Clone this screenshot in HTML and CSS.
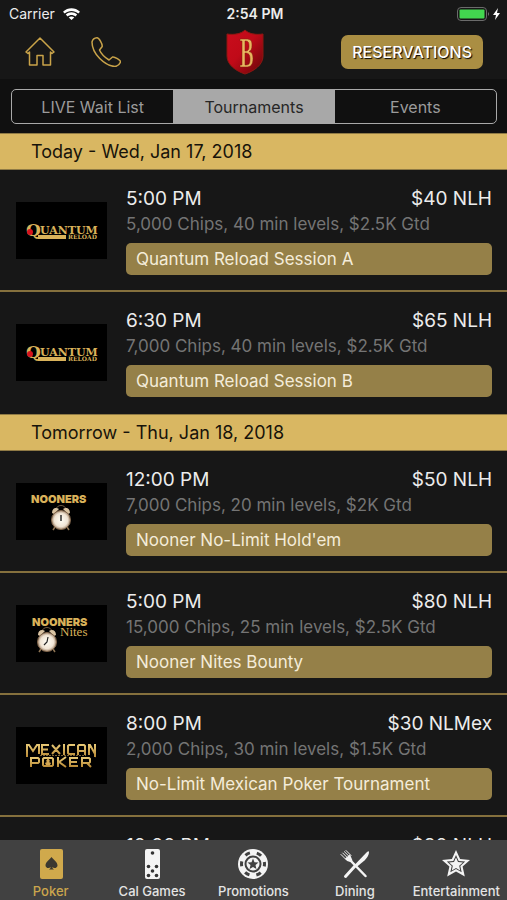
FILE: index.html
```html
<!DOCTYPE html>
<html lang="en">
<head>
<meta charset="utf-8">
<meta name="viewport" content="width=device-width, initial-scale=1">
<title>Tournaments</title>
<link rel="stylesheet" href="styles.css">
</head>
<body>
<svg class="defs" aria-hidden="true">
  <defs>
    <linearGradient id="gold" x1="0" y1="0" x2="0" y2="1">
      <stop offset="0" stop-color="#e8ca78"/><stop offset="1" stop-color="#b98a35"/>
    </linearGradient>
    <radialGradient id="face">
      <stop offset="0" stop-color="#fffdf5"/><stop offset=".7" stop-color="#f0e4d4"/><stop offset="1" stop-color="#a58a70"/>
    </radialGradient>
    <linearGradient id="shield" x1="0" y1="0" x2="1" y2="1">
      <stop offset="0" stop-color="#c90d1c"/><stop offset=".45" stop-color="#c00a18"/><stop offset="1" stop-color="#650609"/>
    </linearGradient>
    <symbol id="quantum" viewBox="0 0 91 57">
      <path d="M22 33h28v4H22z" fill="#d9b25a"/>
      <text x="10" y="34" class="logo-slab logo-q">Q</text>
      <text x="24" y="32" class="logo-slab">UANTUM</text>
      <circle cx="14" cy="30" r="3" fill="#d5131c"/>
      <text x="52" y="37" class="logo-small">RELOAD</text>
    </symbol>
    <symbol id="clock" viewBox="0 0 22 28">
      <path d="M6 6C6 0 16 0 16 6" fill="none" stroke="#6d5a42" stroke-width="1"/>
      <path d="M2 9C2 4 6 3 9 5L4 10zM20 9C20 4 16 3 13 5L18 10z" fill="#d9c3a2"/>
      <path d="M5 23l-2 3M17 23l2 3" stroke="#8d7353" stroke-width="1.5"/>
      <circle cx="11" cy="16" r="9.5" fill="url(#face)" stroke="#80654b"/>
    </symbol>
    <symbol id="nooners" viewBox="0 0 91 57">
      <text x="15" y="20" class="logo-deco">NOONERS</text>
      <use href="#clock" x="34" y="21" width="22" height="28"/>
      <path d="M45 32v6" stroke="#222" stroke-width="1.4"/>
    </symbol>
    <symbol id="nites" viewBox="0 0 91 57">
      <text x="16" y="21" class="logo-deco">NOONERS</text>
      <text x="44" y="31" class="logo-nites">Nites</text>
      <use href="#clock" x="20" y="21" width="22" height="28"/>
      <path d="M32 32l-1 5-3 3" fill="none" stroke="#222" stroke-width="1.2"/>
    </symbol>
    <symbol id="mexican" viewBox="0 0 91 57">
      <g fill="none" stroke="url(#gold)" stroke-width="2">
        <path d="M11 30V18h2l4 6 4-6h2v9M33 18h-7v9h7M26 22.500h6M36 18l8 9M44 18l-8 9M48 17v11M59 18h-6l-1 1v7l1 1h6M62 28v-9l1-1h5l1 1v9M62 24h7M73 28V18h1l5 9V17M79 18v12"/>
        <path d="M15 40v-9h7l1 1v3l-1 1h-7M28 31h8l1 1v6l-1 1h-8l-1-1v-6zM42 30v10M50 30l-7 5 7 5M62 31h-8v8h8M54 35h7M66 40v-9h7l1 1v3l-1 1h-7M71 36l4 4"/>
      </g>
      <path d="M32 31l2 3-1 1 2 1-1 2h-4l-1-2 2-1-1-1z" fill="#d2a651"/>
      <path d="M24 28.500h46" stroke="#7b6232" stroke-dasharray="2 1"/>
    </symbol>
  </defs>
</svg>

<header class="top">
  <div class="status">
    <div class="status-side">
      <span>Carrier</span>
      <svg class="wifi" viewBox="0 0 17 12" role="img" aria-label="Wi-Fi"><path d="M0 3.700C5-.9 12-.9 17 3.700L15.300 5.500C11.500 2 5.500 2 1.700 5.500zM2.800 6.600c3.300-3 8.100-3 11.400 0l-1.800 1.900c-2.300-2-5.500-2-7.800 0zM5.700 9.500c1.600-1.400 4-1.400 5.600 0L8.500 12z" fill="#fff"/></svg>
    </div>
    <time class="clock-time">2:54 PM</time>
    <div class="status-side status-end">
      <svg class="battery" viewBox="0 0 44 14" role="img" aria-label="Battery charging">
        <rect x=".5" y=".5" width="29" height="13" rx="3.500" fill="none" stroke="#6b6b6b"/>
        <rect x="2.500" y="2.500" width="25" height="9" rx="1" fill="#42d74f"/>
        <path d="M31 5q2 2 0 4z" fill="#777"/>
        <path d="M41 1l-5 7h3l-1 5 5-7h-3z" fill="#fff"/>
      </svg>
    </div>
  </div>
  <div class="nav">
    <div class="nav-links">
      <a href="#home" aria-label="Home"><svg class="nav-icon" viewBox="0 0 30 30"><path d="M1 15L15 1l14 14-2 1.500-1.500-1.500v13H18V18.500h-6V28H4.500V15L3 16.500z"/></svg></a>
      <a href="#call" aria-label="Call"><svg class="nav-icon" viewBox="0 0 30 30"><path d="M6 .8Q2 1 1 5C1 17 14 29 24 29.500q4-.5 5.500-4.500c.3-2-6-5.500-8-5l-3.500 3C14 20.500 10 16.500 8.500 13l2.700-3.500C11.500 7 8 .7 6 .8z"/></svg></a>
    </div>
    <svg class="shield" viewBox="0 0 38 46" role="img" aria-label="B">
      <path d="M19 1C15 5 8 6 1 5v22c0 9 9 15 18 18 9-3 18-9 18-18V5C30 6 23 5 19 1z" fill="url(#shield)" stroke="#8d1711"/>
      <path d="M14 10h6c5 0 6 2 6 6 0 4-1 6-3 6.500 3 .5 4 3 4 7 0 6-2 8.500-7 8.500h-6v-2h2V12h-2zm5 2v10c3 0 4-1 4-5 0-4-1-5-4-5zm0 12v12c4 0 5-1 5-6 0-4-1-6-5-6z" fill="#e8b65f" fill-rule="evenodd" stroke="#7f200d" stroke-width=".5"/>
    </svg>
    <div class="nav-end"><button class="reserve" type="button">RESERVATIONS</button></div>
  </div>
</header>

<nav class="segments" aria-label="Poker sections">
  <button type="button">LIVE Wait List</button>
  <button type="button" class="selected" aria-pressed="true">Tournaments</button>
  <button type="button">Events</button>
</nav>

<main class="list">
  <h2 class="day">Today - Wed, Jan 17, 2018</h2>
  <article class="event">
    <svg class="thumb" viewBox="0 0 91 57" aria-hidden="true"><use href="#quantum"/></svg>
    <div class="info">
      <div class="headline"><time>5:00 PM</time><span>$40 NLH</span></div>
      <p class="meta">5,000 Chips, 40 min levels, $2.5K Gtd</p>
      <h3 class="name">Quantum Reload Session A</h3>
    </div>
  </article>
  <article class="event">
    <svg class="thumb" viewBox="0 0 91 57" aria-hidden="true"><use href="#quantum"/></svg>
    <div class="info">
      <div class="headline"><time>6:30 PM</time><span>$65 NLH</span></div>
      <p class="meta">7,000 Chips, 40 min levels, $2.5K Gtd</p>
      <h3 class="name">Quantum Reload Session B</h3>
    </div>
  </article>
  <h2 class="day">Tomorrow - Thu, Jan 18, 2018</h2>
  <article class="event">
    <svg class="thumb" viewBox="0 0 91 57" aria-hidden="true"><use href="#nooners"/></svg>
    <div class="info">
      <div class="headline"><time>12:00 PM</time><span>$50 NLH</span></div>
      <p class="meta">7,000 Chips, 20 min levels, $2K Gtd</p>
      <h3 class="name">Nooner No-Limit Hold'em</h3>
    </div>
  </article>
  <article class="event">
    <svg class="thumb" viewBox="0 0 91 57" aria-hidden="true"><use href="#nites"/></svg>
    <div class="info">
      <div class="headline"><time>5:00 PM</time><span>$80 NLH</span></div>
      <p class="meta">15,000 Chips, 25 min levels, $2.5K Gtd</p>
      <h3 class="name">Nooner Nites Bounty</h3>
    </div>
  </article>
  <article class="event">
    <svg class="thumb" viewBox="0 0 91 57" aria-hidden="true"><use href="#mexican"/></svg>
    <div class="info">
      <div class="headline"><time>8:00 PM</time><span>$30 NLMex</span></div>
      <p class="meta">2,000 Chips, 30 min levels, $1.5K Gtd</p>
      <h3 class="name">No-Limit Mexican Poker Tournament</h3>
    </div>
  </article>
  <article class="event">
    <div class="thumb"></div>
    <div class="info">
      <div class="headline"><time>10:00 PM</time><span>$80 NLH</span></div>
    </div>
  </article>
</main>

<nav class="tabs" aria-label="Main">
  <a href="#poker" class="active" aria-current="page">
    <svg viewBox="0 0 32 32"><rect x="5" y="1" width="23" height="30" rx="2" fill="#d0a94c"/><path d="M16.500 9c2 3 6 5 6 8.500 0 2.500-3.500 3.500-5.200 1.500.1 1.300.8 2 1.700 2.500h-5c.9-.5 1.600-1.200 1.700-2.500-1.700 2-5.200 1-5.200-1.500 0-3.500 4-5.500 6-8.500z" fill="#3b3830"/></svg>
    <span>Poker</span>
  </a>
  <a href="#cal">
    <svg viewBox="0 0 32 32"><rect x="9" y="1" width="15" height="30" rx="2" fill="#f4f4f4"/><g fill="#333"><circle cx="16.500" cy="5" r="1.800"/><circle cx="12.500" cy="18.500" r="1.800"/><circle cx="20.500" cy="18.500" r="1.800"/><circle cx="16.500" cy="23" r="1.800"/><circle cx="12.500" cy="27.500" r="1.800"/><circle cx="20.500" cy="27.500" r="1.800"/></g></svg>
    <span>Cal Games</span>
  </a>
  <a href="#promotions">
    <svg viewBox="0 0 32 32"><circle cx="16" cy="16" r="15" fill="#f4f4f4"/><circle cx="16" cy="16" r="11.500" fill="none" stroke="#414141" stroke-width="3" stroke-dasharray="5 7.043" stroke-dashoffset="2.500"/><circle cx="16" cy="16" r="7.500" fill="#f4f4f4" stroke="#414141" stroke-width="2"/><path d="M16 10.500l1.500 3.700 4 .3-3 2.600.9 3.900-3.400-2.100-3.400 2.100.9-3.900-3-2.600 4-.3z" fill="#414141"/></svg>
    <span>Promotions</span>
  </a>
  <a href="#dining">
    <svg viewBox="0 0 32 32"><g fill="none" stroke="#f4f4f4" stroke-linecap="round"><path d="M11 12l15.500 16" stroke-width="2.500"/><path d="M2 6.500l5 5M3.700 5l5 5M5.400 3.700l5 5M7 2.500l5 5" stroke-width="1"/><path d="M6.500 28.500L16 18" stroke-width="3"/></g><path d="M6 10.500l5-4 2.500 6-2 1.500q-4-.5-5.500-3.500z" fill="#f4f4f4"/><path d="M15 17.500L28 4q2-1.500 2 0 0 4-4.500 8.500l-8.500 7z" fill="#f4f4f4"/></svg>
    <span>Dining</span>
  </a>
  <a href="#entertainment">
    <svg viewBox="0 0 32 32"><path d="M16 2l4.100 9 9.900 1-7.400 6.600 2.200 9.900-8.800-5.100-8.800 5.100 2.200-9.900L2 12l9.900-1z" fill="#f4f4f4"/><path d="M16 7l2.700 5.900 6.500.7-4.900 4.300 1.400 6.400-5.700-3.300-5.700 3.300 1.400-6.400-4.900-4.300 6.500-.7z" fill="#414141"/><path d="M16 9.500l2 4.500 4.900.5-3.700 3.200 1 4.800-4.200-2.500-4.200 2.500 1-4.800-3.700-3.200 4.900-.5z" fill="#f4f4f4"/></svg>
    <span>Entertainment</span>
  </a>
</nav>
</body>
</html>
```
FILE: styles.css
```css
* { box-sizing: border-box; }

body {
  margin: 0;
  height: 100vh;
  display: flex;
  flex-direction: column;
  overflow: hidden;
  background: #101010;
  color: #ececec;
  font-family: Inter, "Liberation Sans", sans-serif;
}

h2, h3, p { margin: 0; font-weight: 400; }
a { color: inherit; text-decoration: none; }
button { font: inherit; cursor: pointer; }

.defs { position: absolute; width: 0; height: 0; }

.top { background: #171717; flex: none; }

.status {
  display: flex;
  align-items: center;
  height: 27px;
  padding: 0 6px 0 9px;
  font-size: 14px;
}
.status-side { flex: 1; display: flex; align-items: center; gap: 8px; }
.status-end { justify-content: flex-end; }
.clock-time { font-weight: 600; }
.wifi { width: 17px; height: 12px; }
.battery { width: 44px; height: 14px; }

.nav {
  display: flex;
  align-items: center;
  height: 50px;
  padding: 0 24px 0 25px;
  margin-bottom: 2px;
}
.nav-links, .nav-end { flex: 1; display: flex; align-items: center; }
.nav-links { gap: 36px; }
.nav-end { justify-content: flex-end; }
.nav-icon {
  display: block;
  width: 30px;
  height: 30px;
  fill: none;
  stroke: #c9a349;
  stroke-width: 1.5;
  stroke-linejoin: round;
}
.shield { width: 38px; height: 46px; margin-right: 18px; }
.reserve {
  height: 34px;
  padding: 0 11px;
  border: 0;
  border-radius: 7px;
  background: #aa8e43;
  color: #fff;
  font-size: 16px;
  font-weight: 500;
  text-shadow: 1px 1px 1px #000;
}

.segments {
  flex: none;
  display: flex;
  margin: 10px 10px 9px 11px;
  height: 35px;
  border: 1px solid #a9a9a9;
  border-radius: 5px;
  overflow: hidden;
}
.segments button {
  flex: 1;
  border: 0;
  padding: 0;
  background: transparent;
  color: #9b9b9b;
  font-size: 16px;
}
.segments .selected { background: #a8a8a8; color: #262626; }

.list { flex: 1; min-height: 0; overflow: hidden; }

.day {
  height: 37px;
  padding: 0 31px;
  border: 1px solid #8f7a45;
  border-width: 1px 0;
  background: #d9b762;
  color: #17130a;
  font-size: 18px;
  line-height: 36px;
}

.event {
  display: flex;
  align-items: center;
  gap: 19px;
  height: 122px;
  padding: 0 15px 0 16px;
  border-bottom: 2px solid #85703d;
  background: #171717;
}
.event:has(+ .day) { border-bottom-color: #171717; }
.thumb { flex: none; width: 91px; height: 57px; background: #000; }
.info { flex: 1; min-width: 0; align-self: flex-start; padding-top: 16px; }
.headline {
  display: flex;
  justify-content: space-between;
  font-size: 19px;
  line-height: 26px;
}
.meta { color: #747474; font-size: 17px; line-height: 24px; }
.name {
  margin-top: 7px;
  padding: 0 10px;
  border-radius: 5px;
  background: #958048;
  color: #f4ecd9;
  font-size: 17px;
  line-height: 32px;
}

.tabs {
  flex: none;
  display: grid;
  grid-template-columns: repeat(5, 1fr);
  height: 60px;
  background: #414141;
  color: #e4e4e4;
  font-size: 13px;
  font-weight: 500;
}
.tabs a {
  display: flex;
  flex-direction: column;
  align-items: center;
  gap: 3px;
  padding-top: 8px;
}
.tabs svg { width: 32px; height: 32px; }
.tabs span { line-height: 16px; }
.tabs .active { color: #cba64d; }

.logo-slab, .logo-small, .logo-deco, .logo-nites {
  fill: #d9b25a;
  font-family: "DejaVu Serif", serif;
  font-weight: 700;
}
.logo-slab { font-size: 11px; }
.logo-q { font-size: 17px; }
.logo-small { font-size: 6px; }
.logo-deco { font-family: Inter, sans-serif; font-weight: 900; font-size: 11px; }
.logo-nites { font-family: "Liberation Serif", serif; font-weight: 400; font-size: 13px; }
```
